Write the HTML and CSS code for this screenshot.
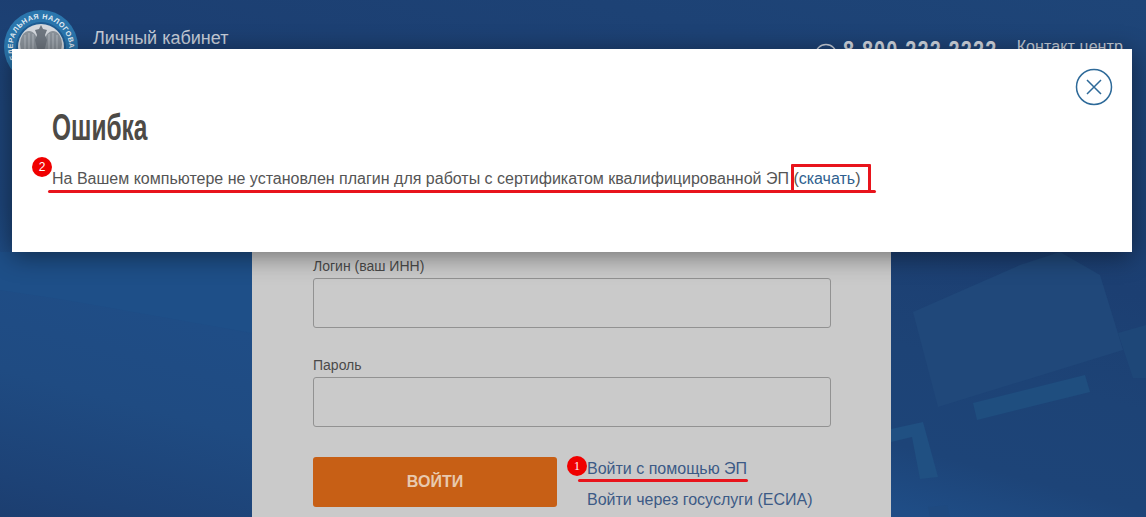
FILE: index.html
```html
<!DOCTYPE html>
<html lang="en">
<head>
  <meta charset="UTF-8">
  <title>Личный кабинет</title>
  <link rel="stylesheet" href="styles.css">
</head>
<body>
  <!-- background shapes -->
  <svg class="bg-shapes" width="1146" height="517" viewBox="0 0 1146 517">
    <polygon points="0,252 252,252 252,333 66,300 0,290" fill="#1e4f88"/>
    <polygon points="913,312 1020,265 1060,252 1100,275 1123,350 938,407" fill="#20487a"/>
    <polygon points="973,403 1085,375 1090,392 977,420" fill="#1f4e7f"/>
    <polygon points="891,429 923,422 938,477 920,479 912,437 891,442" fill="#205082"/>
    <polygon points="928,507 947,505 950,517 930,517" fill="#1f4a80"/>
    <polygon points="1118,333 1146,325 1146,378 1133,378" fill="#1e4778"/>
  </svg>

  <div class="header">
    <svg class="logo" width="74" height="74" viewBox="0 0 74 74">
      <defs>
        <path id="ringPath" d="M15.24 54.62 A28 28 0 1 1 58.76 19.38 A28 28 0 1 1 15.24 54.62"/>
      </defs>
      <circle cx="37" cy="37" r="37" fill="#2b76ad"/>
      <circle cx="37" cy="37" r="25" fill="#1f5c92"/>
      <circle cx="37" cy="37" r="23" fill="#d5d9de"/>
      <text class="logo-text"><textPath href="#ringPath">ФЕДЕРАЛЬНАЯ НАЛОГОВАЯ СЛУЖБА</textPath></text>
      <!-- eagle -->
      <ellipse class="eagle-wing" cx="25" cy="34" rx="9" ry="13"/>
      <ellipse class="eagle-wing" cx="49" cy="34" rx="9" ry="13"/>
      <path class="eagle-body" d="M37 15 l2 4 l4 1 l-2 5 l2 5 l-3 12 l-3 4 l-3-4 l-3-12 l2-5 l-2-5 l4-1 z"/>
      <path class="eagle-lines" d="M21 25 v18 M25 23 v22 M29 24 v20 M45 24 v20 M49 23 v22 M53 25 v18"/>
    </svg>
    <div class="header-title">Личный кабинет</div>
    <div class="contact">
      <svg class="contact-icon" width="24" height="24" viewBox="0 0 24 24">
        <circle cx="12" cy="12" r="10.5"/>
        <path d="M5 13 a7 6 0 0 1 14 0"/>
      </svg>
      <span class="phone">8 800 222 2222</span>
      <span class="contact-label">Контакт центр</span>
    </div>
  </div>

  <div class="login-panel">
    <label class="field-label">Логин (ваш ИНН)</label>
    <div class="field"></div>
    <label class="field-label">Пароль</label>
    <div class="field"></div>
    <div class="actions">
      <button class="login-btn">ВОЙТИ</button>
      <div class="login-links">
        <a href="#">Войти с помощью ЭП</a>
        <a href="#">Войти через госуслуги (ЕСИА)</a>
      </div>
    </div>
  </div>

  <div class="modal">
    <svg class="modal-close" width="38" height="38" viewBox="0 0 38 38">
      <circle cx="19" cy="19" r="17.5"/>
      <path d="M12 12 L26 26 M26 12 L12 26"/>
    </svg>
    <h1 class="modal-title">Ошибка</h1>
    <p class="modal-text">На Вашем компьютере не установлен плагин для работы с сертификатом квалифицированной ЭП <span class="modal-link">(<a href="#">скачать</a>)</span></p>
  </div>

  <!-- red marks on top of the screenshot -->
  <div class="mark-badge mark-two">2</div>
  <div class="mark-line mark-line-two"></div>
  <div class="mark-box"></div>
  <div class="mark-badge mark-one">1</div>
  <div class="mark-line mark-line-one"></div>
</body>
</html>
```

FILE: styles.css
```css
body {
  font-family: "Liberation Sans", Arial, sans-serif;
  margin: 0;
  height: 517px;
  position: relative;
  overflow: hidden;
  background: linear-gradient(195deg, #1e4578 0%, #1c3f72 36%, #1d4376 50%, #1d4478 62%, #1f4d86 70%, #1f4b82 82%, #1d4276 95%, #1c3e70 100%);
}
.bg-shapes {
  position: absolute;
  top: 0;
  left: 0;
}
.header {
  position: relative;
  display: flex;
  height: 90px;
  padding: 10px 23px 0 4px;
  box-sizing: border-box;
}
.logo-text {
  font-size: 7.2px;
  font-weight: bold;
  fill: #e4edf4;
  letter-spacing: 0.5px;
}
.eagle-wing { fill: #8b939b; }
.eagle-body { fill: #6f7780; }
.eagle-lines {
  fill: none;
  stroke: #b4bac1;
  stroke-width: 1;
}
.header-title {
  margin: 18px 0 0 15px;
  font-size: 18px;
  color: #c6cdd8;
}
.contact {
  margin-left: auto;
  margin-top: 25px;
  display: flex;
  align-items: flex-start;
}
.contact-icon {
  margin: 8px 5px 0 0;
}
.contact-icon circle, .contact-icon path {
  fill: none;
  stroke: #c6cdd8;
  stroke-width: 1.3;
}
.phone {
  display: inline-block;
  width: 154px;
  white-space: nowrap;
  transform: scaleX(0.76);
  transform-origin: left;
  font-size: 26px;
  line-height: 30px;
  font-weight: bold;
  letter-spacing: 1.6px;
  color: #cfd5de;
  margin-right: 20px;
}
.contact-label {
  font-size: 16px;
  line-height: 24px;
  letter-spacing: 0.1px;
  color: #c6cdd8;
}
.login-panel {
  position: relative;
  width: 639px;
  height: 427px;
  margin-left: 252px;
  padding: 167px 60px 0 61px;
  box-sizing: border-box;
  background: #cacaca;
}
.field-label {
  display: block;
  font-size: 14px;
  line-height: 18px;
  color: #4a4a4a;
  margin-bottom: 3px;
}
.field {
  height: 48px;
  border: 1px solid #929292;
  border-radius: 3px;
  margin-bottom: 28px;
}
.actions {
  display: flex;
  gap: 30px;
  margin-top: 30px;
}
.login-btn {
  width: 244px;
  height: 50px;
  border: none;
  border-radius: 3px;
  background: #c75f15;
  color: #e8c9ae;
  font-family: inherit;
  font-size: 16px;
  font-weight: bold;
}
.login-links {
  display: flex;
  flex-direction: column;
  gap: 13px;
  margin-top: 3px;
}
.login-links a {
  font-size: 16px;
  line-height: 18px;
  color: #3c5a86;
  text-decoration: none;
}
.modal {
  position: absolute;
  top: 49px;
  left: 12px;
  width: 1120px;
  height: 203px;
  padding: 0 40px;
  box-sizing: border-box;
  background: #fff;
  box-shadow: 0 4px 24px rgba(0, 0, 0, 0.45);
}
.modal-title {
  margin: 0;
  padding-top: 57px;
  transform: scaleX(0.68);
  transform-origin: left;
  font-size: 36px;
  line-height: 44px;
  font-weight: bold;
  color: #4d4a46;
}
.modal-text {
  margin: 19px 0 0;
  font-size: 16px;
  line-height: 20px;
  color: #555;
}
.modal-link a {
  color: #2f5f8f;
  text-decoration: none;
}
.modal-close {
  position: absolute;
  top: 19px;
  right: 19px;
}
.modal-close circle, .modal-close path {
  fill: none;
  stroke: #2e6a99;
  stroke-width: 1.5;
}
.mark-badge {
  position: absolute;
  width: 20px;
  height: 20px;
  border-radius: 50%;
  background: #f00000;
  color: #fff;
  font-size: 12px;
  line-height: 20px;
  text-align: center;
}
.mark-two { top: 157px; left: 32px; }
.mark-one {
  top: 456px;
  left: 567px;
  font-family: "Liberation Serif", serif;
}
.mark-line {
  position: absolute;
  height: 3px;
  background: #e8141c;
  border-radius: 2px;
}
.mark-line-two { top: 190px; left: 48px; width: 828px; }
.mark-line-one { top: 479px; left: 578px; width: 170px; }
.mark-box {
  position: absolute;
  top: 164px;
  left: 791px;
  width: 74px;
  height: 23px;
  border: 3px solid #e8141c;
  border-radius: 1px;
}
```
